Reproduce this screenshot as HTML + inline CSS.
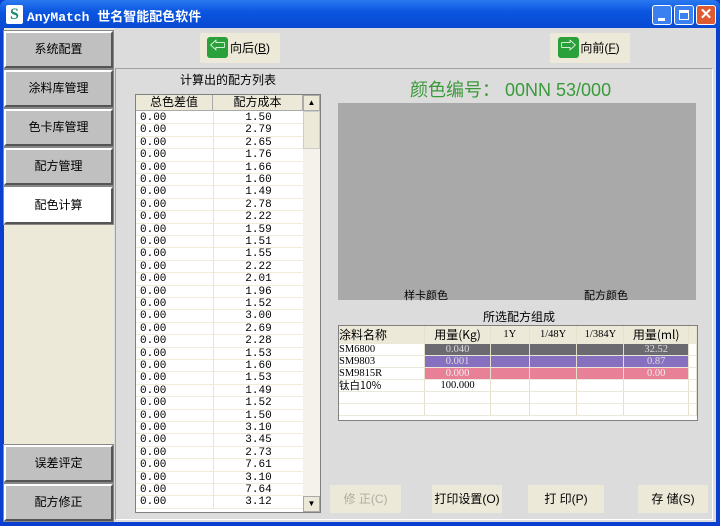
<!DOCTYPE html>
<html><head><meta charset="utf-8"><style>
*{margin:0;padding:0;box-sizing:border-box}
body{width:720px;height:526px;overflow:hidden;font-family:"Liberation Sans","Noto Sans CJK SC",sans-serif;font-size:12px;background:#0a3fd0;position:relative}
.abs{position:absolute}
#title{left:0;top:0;width:720px;height:30px;background:linear-gradient(#2a78f0,#0a55e0 40%,#0848d0);border-radius:7px 7px 0 0}
#client{left:4px;top:28px;width:712px;height:494px;background:#dcdcdc}
.nav{position:absolute;left:4px;width:109px;height:37px;background:#c0c0c0;border:2px solid;border-color:#fff #555 #555 #fff;outline:1px solid #888;text-align:center;line-height:33px;font-size:12px;color:#000}
.nav.sel{background:#fff}
.btn{position:absolute;background:#ece9d8;text-align:center;font-size:12px;color:#000}
table{border-collapse:collapse}
.lt tr{height:12.4px}
.lt td{height:12.4px;font-size:11px;line-height:11px;border-bottom:1px solid #f0ecd8;font-family:"Liberation Mono",monospace;padding:0 3px;overflow:hidden}
.ct td{height:12px;font-size:10.5px;line-height:11px;border-right:1px solid #e4e0cc;border-bottom:1px solid #ece8d8;font-family:"Liberation Serif",serif}
</style></head><body>
<div id="title" class="abs"></div>
<div class="abs" style="left:6px;top:5px;width:17px;height:19px;background:#fff;border-radius:2px;color:#1a8a6a;font:bold 16px 'Liberation Serif',serif;text-align:center;line-height:19px">S</div>
<div class="abs" style="left:27px;top:6px;color:#fff;font-weight:bold;font-size:13px;font-family:'Liberation Mono','Noto Sans CJK SC',monospace;letter-spacing:0">AnyMatch 世名智能配色软件</div>
<div class="abs" style="left:652px;top:5px;width:20px;height:20px;background:#3a80f0;border:1px solid #fff;border-radius:3px"><div style="position:absolute;left:5px;top:12px;width:7px;height:3px;background:#fff"></div></div>
<div class="abs" style="left:674px;top:5px;width:20px;height:20px;background:#3a80f0;border:1px solid #fff;border-radius:3px"><div style="position:absolute;left:4px;top:4px;width:10px;height:10px;border:1px solid #fff;border-top-width:3px"></div></div>
<div class="abs" style="left:696px;top:5px;width:20px;height:20px;background:#e05a30;border:1px solid #fff;border-radius:3px;color:#fff;font-weight:bold;text-align:center;line-height:18px;font-size:15px">✕</div>
<div id="client" class="abs"></div>
<div class="abs" style="left:4px;top:28px;width:110px;height:494px;background:#ece9d8"></div>
<div class="nav" style="top:31px">系统配置</div>
<div class="nav" style="top:70px">涂料库管理</div>
<div class="nav" style="top:109px">色卡库管理</div>
<div class="nav" style="top:148px">配方管理</div>
<div class="nav sel" style="top:187px">配色计算</div>
<div class="nav" style="top:445px">误差评定</div>
<div class="nav" style="top:484px">配方修正</div>
<div class="abs" style="left:115px;top:68px;width:598px;height:452px;border:1px solid;border-color:#a0a0a0 #fff #fff #a0a0a0;background:#dcdcdc"></div>
<div class="btn" style="left:200px;top:33px;width:80px;height:30px;line-height:30px;padding-left:20px">向后(<u>B</u>)</div>
<div class="abs" style="left:207px;top:37px;width:21px;height:21px;background:#2aa03a;border-radius:3px;color:#fff;font-weight:bold;text-align:center;line-height:20px;font-size:16px">⇦</div>
<div class="btn" style="left:550px;top:33px;width:80px;height:30px;line-height:30px;padding-left:20px">向前(<u>F</u>)</div>
<div class="abs" style="left:558px;top:37px;width:21px;height:21px;background:#2aa03a;border-radius:3px;color:#fff;font-weight:bold;text-align:center;line-height:20px;font-size:16px">⇨</div>
<div class="abs" style="left:180px;top:71px;font-size:12px">计算出的配方列表</div>
<div class="abs" style="left:135px;top:94px;width:186px;height:419px;border:1px solid #808080;background:#fff;overflow:hidden">
<div style="display:flex;height:16px;background:#ece9d8;font-size:12px;line-height:15px;border-bottom:1px solid #aaa"><div style="width:77px;text-align:center;border-right:1px solid #aaa">总色差值</div><div style="width:90px;text-align:center;border-right:1px solid #aaa">配方成本</div></div>
<div id="lb" style="position:absolute;left:0;top:17px;width:167px"></div>
<div style="position:absolute;left:167px;top:0;width:17px;height:417px;background:#f4f2ea"><div style="height:16px;background:#ece9d8;border:1px solid #aaa;text-align:center;font-size:8px;line-height:14px">▲</div><div style="height:38px;background:#ece9d8;border:1px solid #ccc"></div><div style="position:absolute;bottom:0;width:17px;height:16px;background:#ece9d8;border:1px solid #aaa;text-align:center;font-size:8px;line-height:14px">▼</div></div>
</div>
<div class="abs" style="left:410px;top:76px;color:#3a9a3a;font-size:18px;font-family:'Liberation Sans','Noto Sans CJK SC',sans-serif">颜色编号： 00NN 53/000</div>
<div class="abs" style="left:338px;top:103px;width:358px;height:197px;background:#a9a9a9"></div>
<div class="abs" style="left:404px;top:287px;font-size:11px">样卡颜色</div>
<div class="abs" style="left:584px;top:287px;font-size:11px">配方颜色</div>
<div class="abs" style="left:483px;top:308px;font-size:12px">所选配方组成</div>
<div class="abs" style="left:338px;top:325px;width:360px;height:96px;border:1px solid #808080;background:#fff;overflow:hidden">
<table class="ct"><tr style="background:#ece9d8;height:17px"><td style="width:86px;font-size:12px;font-family:'Noto Sans CJK SC',sans-serif;height:17px">涂料名称</td><td style="width:66px;text-align:center;font-size:12px;font-family:'Noto Sans CJK SC',sans-serif">用量(Kg)</td><td style="width:39px;text-align:center">1Y</td><td style="width:48px;text-align:center">1/48Y</td><td style="width:47px;text-align:center">1/384Y</td><td style="width:65px;text-align:center;font-size:12px;font-family:'Noto Sans CJK SC',sans-serif">用量(ml)</td><td style="width:8px"></td></tr>
<tr><td>SM6800</td><td style="background:#6a6a70;color:#ddd;text-align:center">0.040</td><td style="background:#6a6a70"></td><td style="background:#6a6a70"></td><td style="background:#6a6a70"></td><td style="background:#6a6a70;color:#ddd;text-align:center">32.52</td><td></td></tr>
<tr><td>SM9803</td><td style="background:#8870c0;color:#ddd;text-align:center">0.001</td><td style="background:#8870c0"></td><td style="background:#8870c0"></td><td style="background:#8870c0"></td><td style="background:#8870c0;color:#ddd;text-align:center">0.87</td><td></td></tr>
<tr><td>SM9815R</td><td style="background:#e88098;color:#eee;text-align:center">0.000</td><td style="background:#e88098"></td><td style="background:#e88098"></td><td style="background:#e88098"></td><td style="background:#e88098;color:#eee;text-align:center">0.00</td><td></td></tr>
<tr><td style="font-family:'Noto Sans CJK SC',sans-serif">钛白10%</td><td style="text-align:center">100.000</td><td></td><td></td><td></td><td></td><td></td></tr>
<tr><td></td><td></td><td></td><td></td><td></td><td></td><td></td></tr>
<tr><td></td><td></td><td></td><td></td><td></td><td></td><td></td></tr>
</table></div>
<div class="btn" style="left:330px;top:485px;width:71px;height:28px;line-height:28px;color:#b0aca0">修 正(C)</div>
<div class="btn" style="left:432px;top:485px;width:70px;height:28px;line-height:28px">打印设置(O)</div>
<div class="btn" style="left:528px;top:485px;width:76px;height:28px;line-height:28px">打 印(P)</div>
<div class="btn" style="left:638px;top:485px;width:70px;height:28px;line-height:28px">存 储(S)</div>
<script>
var v="1.50 2.79 2.65 1.76 1.66 1.60 1.49 2.78 2.22 1.59 1.51 1.55 2.22 2.01 1.96 1.52 3.00 2.69 2.28 1.53 1.60 1.53 1.49 1.52 1.50 3.10 3.45 2.73 7.61 3.10 7.64 3.12".split(" "),h="";
v.forEach(function(x,i){h+='<div style="position:absolute;left:0;top:'+(i*12.4).toFixed(1)+'px;width:167px;height:12.4px;border-bottom:1px solid #f0ecd8;font:11px/12px \'Liberation Mono\',monospace"><span style="position:absolute;left:4px">0.00</span><span style="position:absolute;left:77px;width:90px;text-align:center;border-left:1px solid #e8e4d0;height:12px">'+x+'</span></div>'});
document.getElementById("lb").innerHTML=h;
</script>
</body></html>
